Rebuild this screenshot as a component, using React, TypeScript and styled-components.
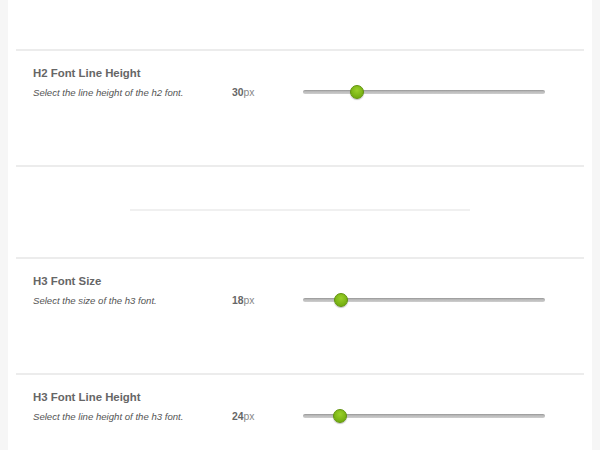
import React from 'react';
import styled, { createGlobalStyle } from 'styled-components';

const GlobalStyle = createGlobalStyle`
  html, body {
    margin: 0;
    padding: 0;
    background: #f6f6f6;
    font-family: "Liberation Sans", Arial, Helvetica, sans-serif;
  }
`;

const Page = styled.div`
  width: 600px;
  height: 450px;
  overflow: hidden;
  background: #f6f6f6;
  padding: 0 8px;
  box-sizing: border-box;
`;

const Panel = styled.div`
  background: #fff;
  height: 100%;
  padding: 0 8px;
  box-sizing: border-box;
`;

const TopSpace = styled.div`
  height: 49px;
`;

const Rule = styled.div`
  height: 2px;
  background: #ececec;
`;

const Section = styled.div`
  height: 114px;
  padding: 15px 0 0 17px;
  box-sizing: border-box;
`;

const Title = styled.h3`
  margin: 0;
  font-size: 11.4px;
  font-weight: bold;
  color: #666;
  line-height: 14px;
`;

const Row = styled.div`
  display: flex;
  align-items: center;
  height: 18px;
  margin-top: 3px;
`;

const Description = styled.p`
  margin: 0;
  width: 199px;
  font-size: 9.6px;
  font-style: italic;
  color: #555;
`;

const Value = styled.span`
  width: 71px;
  font-size: 10.4px;
  color: #888;

  b {
    color: #666;
  }
`;

const Track = styled.div`
  position: relative;
  width: 242px;
  height: 4px;
  margin-bottom: 1px;
  border-radius: 2px;
  background: linear-gradient(#aaa, #cfcfcf);
  box-shadow: inset 0 1px 0 rgba(0, 0, 0, 0.08);
`;

const Thumb = styled.div`
  position: absolute;
  top: 50%;
  width: 14px;
  height: 14px;
  margin: -7px 0 0 -7px;
  box-sizing: border-box;
  border-radius: 50%;
  border: 1px solid #5f920a;
  background: radial-gradient(circle at 50% 35%, #9ad02a, #76b012 70%);
  box-shadow: 0 1px 1px rgba(0, 0, 0, 0.25);
`;

const Gap = styled.div`
  height: 90px;
  display: flex;
  align-items: center;
  justify-content: center;
`;

const Divider = styled.div`
  width: 340px;
  height: 2px;
  margin-top: -4px;
  background: #f0f0f0;
`;

interface SettingProps {
  title: string;
  description: string;
  value: number;
  pos: number;
}

const Setting: React.FC<SettingProps> = ({ title, description, value, pos }) => (
  <Section>
    <Title>{title}</Title>
    <Row>
      <Description>{description}</Description>
      <Value><b>{value}</b>px</Value>
      <Track>
        <Thumb style={{ left: `${pos}px` }} />
      </Track>
    </Row>
  </Section>
);

export default function App() {
  return (
    <Page>
      <GlobalStyle />
      <Panel>
        <TopSpace />
        <Rule />
        <Setting
          title="H2 Font Line Height"
          description="Select the line height of the h2 font."
          value={30}
          pos={54}
        />
        <Rule />
        <Gap>
          <Divider />
        </Gap>
        <Rule />
        <Setting
          title="H3 Font Size"
          description="Select the size of the h3 font."
          value={18}
          pos={38}
        />
        <Rule />
        <Setting
          title="H3 Font Line Height"
          description="Select the line height of the h3 font."
          value={24}
          pos={37}
        />
      </Panel>
    </Page>
  );
}
